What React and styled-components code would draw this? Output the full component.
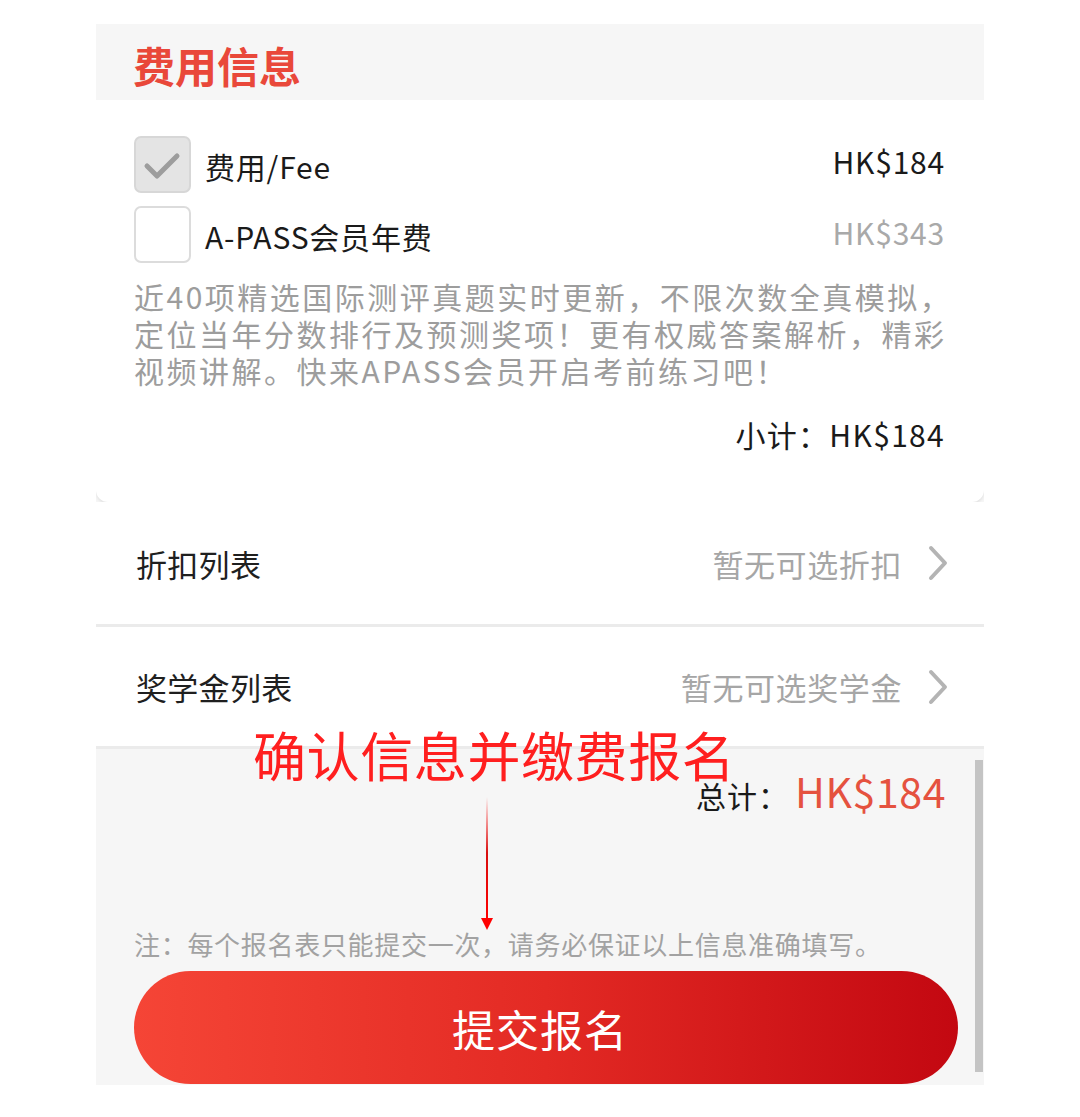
import React from 'react'
import styled, { createGlobalStyle } from 'styled-components'

const GlobalStyle = createGlobalStyle`
  html, body {
    margin: 0;
    padding: 0;
    background: #fff;
  }
  body {
    font-family: "Noto Sans CJK SC", "Noto Sans", sans-serif;
  }
`

const items = [
  { id: 'fee', label: '费用/Fee', price: 'HK$184', checked: true },
  { id: 'apass', label: 'A-PASS会员年费', price: 'HK$343', checked: false }
]

const lists = [
  { id: 'discount', title: '折扣列表', hint: '暂无可选折扣', height: 125 },
  { id: 'scholarship', title: '奖学金列表', hint: '暂无可选奖学金', height: 122 }
]

function Check({ checked }) {
  return (
    <CheckBox checked={checked}>
      {checked && (
        <svg width="57" height="57" viewBox="0 0 57 57">
          <polyline points="13,30 23,40 43,20" fill="none" stroke="#9d9d9d" strokeWidth="5" strokeLinecap="round" strokeLinejoin="round" />
        </svg>
      )}
    </CheckBox>
  )
}

function Chevron() {
  return (
    <svg width="20" height="36" viewBox="0 0 20 36">
      <polyline points="3,3 17,18 3,33" fill="none" stroke="#b4b4b4" strokeWidth="4" strokeLinecap="round" strokeLinejoin="round" />
    </svg>
  )
}

function App() {
  return (
    <>
      <GlobalStyle />
      <Phone>
        <Header>
          <Title>费用信息</Title>
        </Header>

        <Card>
          {items.map(item => (
            <ItemRow key={item.id}>
              <Check checked={item.checked} />
              <ItemLabel>{item.label}</ItemLabel>
              <Price muted={!item.checked}>{item.price}</Price>
            </ItemRow>
          ))}
          <Desc>
            近40项精选国际测评真题实时更新，不限次数全真模拟，<br />
            定位当年分数排行及预测奖项！更有权威答案解析，精彩<br />
            视频讲解。快来APASS会员开启考前练习吧！
          </Desc>
          <Subtotal>小计：HK$184</Subtotal>
        </Card>

        {lists.map(l => (
          <ListRow key={l.id} h={l.height}>
            <ListTitle>{l.title}</ListTitle>
            <ListHint>
              {l.hint}
              <Chevron />
            </ListHint>
          </ListRow>
        ))}

        <Bottom>
          <TotalRow>
            <TotalLabel>总计：</TotalLabel>
            <TotalValue>HK$184</TotalValue>
          </TotalRow>
          <Note>注：每个报名表只能提交一次，请务必保证以上信息准确填写。</Note>
          <SubmitButton type="button">提交报名</SubmitButton>
        </Bottom>

        <Annotation>确认信息并缴费报名</Annotation>
        <Arrow width="16" height="134" viewBox="0 0 16 134">
          <defs>
            <linearGradient id="arrowFade" x1="0" y1="0" x2="0" y2="1">
              <stop offset="0" stopColor="#ff1a1a" stopOpacity="0" />
              <stop offset="0.45" stopColor="#d81010" />
              <stop offset="1" stopColor="#ff0000" />
            </linearGradient>
          </defs>
          <rect x="7" y="0" width="2" height="124" fill="url(#arrowFade)" />
          <polygon points="2,121 14,121 8,133" fill="#ff0000" />
        </Arrow>
        <ScrollBar />
      </Phone>
    </>
  )
}

export default App

const Phone = styled.div`
  position: relative;
  width: 888px;
  height: 1061px;
  margin: 24px auto 0;
  background: #f6f6f6;
  overflow: hidden;
  color: #1a1a1a;
`

const Header = styled.div`
  height: 76px;
  display: flex;
  align-items: center;
  padding-left: 37px;
`

const Title = styled.h2`
  margin: 0;
  font-size: 42px;
  font-weight: 700;
  color: #e9483a;
  position: relative;
  top: 2px;
`

const Card = styled.div`
  background: #fff;
  border-radius: 0 0 12px 12px;
  box-shadow: 0 2px 3px rgba(0, 0, 0, 0.08);
  padding: 36px 39px 48px 38px;
`

const ItemRow = styled.div`
  display: flex;
  align-items: center;
  height: 57px;
  & + & {
    margin-top: 13px;
  }
`

const CheckBox = styled.div`
  width: 57px;
  height: 57px;
  box-sizing: border-box;
  border-radius: 7px;
  border: 2px solid ${p => (p.checked ? '#d7d7d7' : '#dcdcdc')};
  background: ${p => (p.checked ? '#e4e4e4' : '#fff')};
  display: flex;
  align-items: center;
  justify-content: center;
  flex-shrink: 0;
  svg {
    margin: -2px;
  }
`

const ItemLabel = styled.span`
  margin-left: 14px;
  font-size: 30px;
  letter-spacing: 0.8px;
  flex: 1;
  position: relative;
  top: 1px;
`

const Price = styled.span`
  font-size: 30px;
  letter-spacing: 0.8px;
  color: ${p => (p.muted ? '#a9a9a9' : '#1a1a1a')};
  position: relative;
  top: ${p => (p.muted ? '-3px' : '-4px')};
`

const Desc = styled.p`
  margin: 15px 0 0;
  font-size: 30px;
  line-height: 37px;
  color: #9d9d9d;
  white-space: nowrap;
  letter-spacing: 2.5px;
`

const Subtotal = styled.div`
  margin-top: 25px;
  text-align: right;
  font-size: 30px;
  line-height: 40px;
  letter-spacing: 1.3px;
`

const ListRow = styled.div`
  background: #fff;
  height: ${p => p.h}px;
  box-sizing: border-box;
  display: flex;
  align-items: center;
  justify-content: space-between;
  padding: 0 36px 0 40px;
  border-bottom: 3px solid #ebebeb;
  &:first-of-type {
    margin-top: 2px;
  }
`

const ListTitle = styled.span`
  font-size: 31px;
  color: #1f1f1f;
  letter-spacing: 0.3px;
`

const ListHint = styled.span`
  display: flex;
  align-items: center;
  gap: 26px;
  font-size: 31px;
  color: #a6a6a6;
  letter-spacing: 0.6px;
`

const Bottom = styled.div`
  padding: 11px 38px 0;
  display: flex;
  flex-direction: column;
`

const TotalRow = styled.div`
  display: flex;
  justify-content: flex-end;
  align-items: baseline;
  height: 50px;
`

const TotalLabel = styled.span`
  font-size: 30px;
  color: #1a1a1a;
  letter-spacing: 1px;
`

const TotalValue = styled.span`
  margin-left: 6px;
  font-size: 41px;
  color: #e5523f;
  letter-spacing: 0.6px;
`

const Note = styled.div`
  margin-top: 117px;
  font-size: 26px;
  line-height: 34px;
  color: #a2a2a2;
  white-space: nowrap;
  letter-spacing: 0.7px;
`

const SubmitButton = styled.button`
  margin-top: 10px;
  width: 824px;
  height: 113px;
  border: none;
  border-radius: 57px;
  background: linear-gradient(90deg, #f54536 0%, #e32a24 50%, #c30811 100%);
  color: #fff;
  font-family: "Noto Sans CJK SC", "Noto Sans", sans-serif;
  font-size: 43px;
  letter-spacing: 1px;
  padding: 0 12px 0 0;
`

const Annotation = styled.div`
  position: absolute;
  left: 157px;
  top: 698px;
  font-size: 53px;
  line-height: 64px;
  color: #ff1f1f;
  white-space: nowrap;
  letter-spacing: 0.6px;
`

const Arrow = styled.svg`
  position: absolute;
  left: 383px;
  top: 773px;
`

const ScrollBar = styled.div`
  position: absolute;
  right: 1px;
  top: 736px;
  width: 8px;
  height: 312px;
  background: #c4c4c4;
`
